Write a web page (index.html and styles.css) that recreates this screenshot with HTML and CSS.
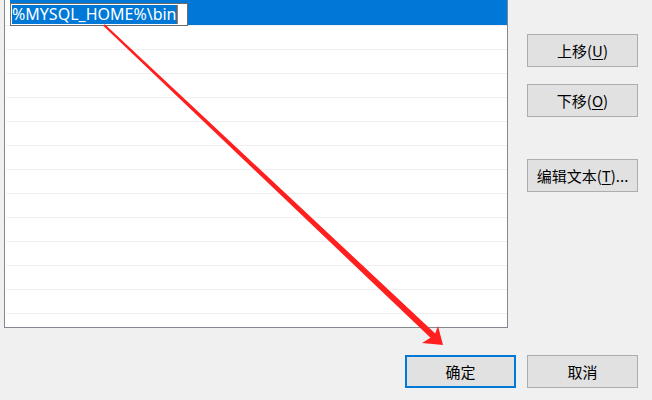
FILE: index.html
```html
<!DOCTYPE html>
<html lang="zh-CN">
<head>
<meta charset="utf-8">
<title>编辑环境变量</title>
<link rel="stylesheet" href="styles.css">
</head>
<body>
<div class="dialog">
  <div class="main">
    <div class="listbox">
      <div class="row first">
        <div class="sel">
          <div class="editor"><span class="seltext">%MYSQL_HOME%\bin</span><span class="caret"></span></div>
        </div>
      </div>
      <div class="row"></div>
      <div class="row"></div>
      <div class="row"></div>
      <div class="row"></div>
      <div class="row"></div>
      <div class="row"></div>
      <div class="row"></div>
      <div class="row"></div>
      <div class="row"></div>
      <div class="row"></div>
      <div class="row"></div>
      <div class="row"></div>
    </div>
    <div class="side">
      <button class="btn up">上移(<u>U</u>)</button>
      <button class="btn down">下移(<u>O</u>)</button>
      <button class="btn edit">编辑文本(<u>T</u>)...</button>
    </div>
  </div>
  <div class="footer">
    <button class="btn primary">确定</button>
    <button class="btn">取消</button>
  </div>
</div>
<svg class="arrow" width="652" height="400" viewBox="0 0 652 400" xmlns="http://www.w3.org/2000/svg">
  <polygon fill="#ff1f1f" points="104.8,24.2 435.2,333.4 438,326 443,345 422,343 430.5,337.8 103.2,25.8"/>
</svg>
</body>
</html>
```
FILE: styles.css
```css
html, body {
  margin: 0;
  padding: 0;
}
body {
  width: 652px;
  height: 400px;
  overflow: hidden;
  background: #f0f0f0;
  font-family: "Noto Sans CJK SC", "Noto Sans", sans-serif;
  position: relative;
}
.dialog {
  display: flex;
  flex-direction: column;
}
.main {
  display: flex;
  align-items: flex-start;
}
.listbox {
  margin-top: -1px;
  margin-left: 4px;
  width: 502px;
  height: 327px;
  border: 1px solid #828790;
  background: #fff;
  overflow: hidden;
}
.row {
  height: 23px;
  margin-left: 1px;
  border-bottom: 1px solid #efefef;
}
.row.first {
  height: 25px;
  margin-left: 0;
  padding-left: 5px;
  display: flex;
}
.sel {
  flex: 1;
  height: 25px;
  background: #0078d7;
}
.editor {
  box-sizing: border-box;
  width: 178px;
  height: 23px;
  margin-top: 3px;
  border: 1px solid #6b6b6b;
  background: #fff;
  padding: 1px 0 1px 1px;
  display: flex;
  align-items: stretch;
}
.seltext {
  background: #0078d7;
  color: #fff;
  font-family: "Noto Sans", sans-serif;
  font-size: 16px;
  line-height: 19px;
  white-space: nowrap;
}
.caret {
  width: 1px;
  background: #e07020;
}
.side {
  margin-left: 19px;
  margin-top: 34px;
  display: flex;
  flex-direction: column;
}
.btn {
  box-sizing: border-box;
  width: 111px;
  height: 33px;
  margin: 0;
  padding: 0;
  border: 1px solid #adadad;
  background: #e1e1e1;
  color: #000;
  font-family: "Noto Sans CJK SC", sans-serif;
  font-size: 15px;
  line-height: 31px;
}
.btn u {
  text-underline-offset: 2px;
}
.down {
  margin-top: 17px;
}
.edit {
  margin-top: 42px;
}
.footer {
  display: flex;
  justify-content: flex-end;
  gap: 11px;
  margin-top: 27px;
  padding-right: 14px;
}
.btn.primary {
  border: 2px solid #0078d7;
  line-height: 29px;
}
.arrow {
  position: absolute;
  left: 0;
  top: 0;
}
```
